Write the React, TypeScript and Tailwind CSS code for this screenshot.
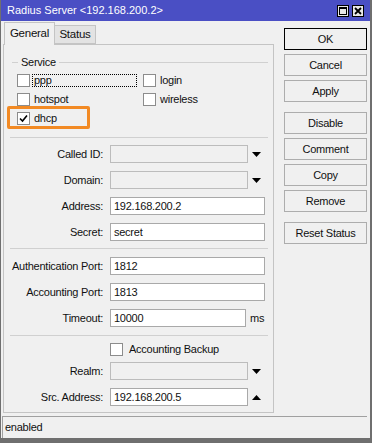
import React from 'react';

const Tri: React.FC<{ up?: boolean }> = ({ up }) => (
  <svg width="9" height="5" viewBox="0 0 9 5" className="ml-[4px] shrink-0">
    <polygon points={up ? '0,5 9,5 4.5,0' : '0,0 9,0 4.5,5'} fill="#000" />
  </svg>
);

const Box: React.FC<{ checked?: boolean }> = ({ checked }) => (
  <div className="w-[13px] h-[13px] border border-[#8c8c8c] bg-white shrink-0 flex items-center justify-center">
    {checked && (
      <svg width="9" height="9" viewBox="0 0 9 9">
        <path d="M1 4.5 L3.5 7 L8 1.5" stroke="#000" strokeWidth="1.6" fill="none" />
      </svg>
    )}
  </div>
);

const Field: React.FC<{ value?: string; w: string; disabled?: boolean }> = ({ value, w, disabled }) => (
  <div
    className={`${w} h-[18px] border flex items-center pl-[3px] ${
      disabled ? 'bg-[#f0f0f0] border-[#bcbcbc]' : 'bg-white border-[#a9a9a9]'
    }`}
  >
    {value}
  </div>
);

const Row: React.FC<{ label: string; className?: string; children: React.ReactNode }> = ({ label, className, children }) => (
  <div className={`flex items-center ${className ?? ''}`}>
    <div className="w-[99px] mr-[7px] text-right whitespace-nowrap">{label}</div>
    {children}
  </div>
);

const Sep: React.FC<{ className?: string }> = ({ className }) => (
  <div className={`ml-[6px] mr-[5px] h-px bg-[#d0d0d0] ${className ?? ''}`} />
);

const Btn: React.FC<{ label: string; main?: boolean; className?: string }> = ({ label, main, className }) => (
  <div
    className={`w-[83px] h-[22px] flex items-center justify-center bg-[#f0f0f0] border ${
      main ? 'border-black' : 'border-[#adadad]'
    } ${className ?? ''}`}
  >
    {label}
  </div>
);

export default function App() {
  return (
    <div
      className="w-[372px] h-[443px] bg-[#f0f0f0] flex flex-col border-l border-r-2 border-b-[5px] border-[#6f6f6f] text-[11px] tracking-[-0.25px] text-[#111] overflow-hidden"
      style={{ fontFamily: '"Liberation Sans", Arial, sans-serif' }}
    >
      {/* title bar */}
      <div className="h-[21px] shrink-0 bg-[#4a4fc4] flex items-center pl-[6px] pr-[6px] text-white text-[11px] tracking-normal">
        <span className="flex-1">Radius Server &lt;192.168.200.2&gt;</span>
        <div className="flex gap-[3px]">
          <div className="w-[12px] h-[12px] bg-[#e8e8e8] border border-black flex items-center justify-center">
            <div className="w-[8px] h-[8px] border border-black border-t-2" />
          </div>
          <div className="w-[12px] h-[12px] bg-[#e8e8e8] border border-black flex items-center justify-center">
            <svg width="8" height="8" viewBox="0 0 8 8">
              <path d="M1 1 L7 7 M7 1 L1 7" stroke="#000" strokeWidth="1.8" />
            </svg>
          </div>
        </div>
      </div>

      {/* body */}
      <div className="flex mt-px">
        <div className="ml-[2px] w-[271px] flex flex-col">
          {/* tabs */}
          <div className="flex items-start h-[23px] -mb-px relative z-10 pl-px">
            <div className="w-[51px] h-[23px] bg-[#f0f0f0] border border-b-0 border-[#c4c4c4] flex items-center justify-center text-[11.5px]">
              General
            </div>
            <div className="mt-[3px] w-[41px] h-[19px] bg-[#e3e3e3] border border-l-0 border-[#c4c4c4] flex items-center justify-center text-[11.5px]">
              Status
            </div>
          </div>

          {/* panel */}
          <div className="relative h-[369px] border border-[#c4c4c4] bg-[#f0f0f0] flex flex-col">
            {/* Service group */}
            <div className="mt-[11px] ml-[8px] mr-[5px] h-[13px] flex items-center">
              <div className="w-[6px] h-px bg-[#d0d0d0]" />
              <span className="mx-[3px]">Service</span>
              <div className="flex-1 h-px bg-[#d0d0d0]" />
            </div>
            <div className="mt-[5px] ml-[13px] grid grid-cols-[126px_1fr] gap-y-[6px]">
              <div className="flex items-center h-[13px]">
                <Box />
                <span className="ml-[2px] w-[105px] h-[13px] border border-dotted border-black flex items-center pl-px">
                  ppp
                </span>
              </div>
              <div className="flex items-center h-[13px]">
                <Box />
                <span className="ml-[4px]">login</span>
              </div>
              <div className="flex items-center h-[13px]">
                <Box />
                <span className="ml-[4px]">hotspot</span>
              </div>
              <div className="flex items-center h-[13px]">
                <Box />
                <span className="ml-[4px]">wireless</span>
              </div>
              <div className="flex items-center h-[13px]">
                <Box checked />
                <span className="ml-[4px]">dhcp</span>
              </div>
            </div>
            {/* highlight annotation */}
            <div className="absolute left-[3px] top-[61px] w-[83px] h-[23px] border-[3px] border-[#f28a24] rounded-[2px]" />

            <Sep className="mt-[12px]" />

            <Row label="Called ID:" className="mt-[7px]">
              <Field w="w-[138px]" disabled />
              <Tri />
            </Row>
            <Row label="Domain:" className="mt-[8px]">
              <Field w="w-[138px]" disabled />
              <Tri />
            </Row>
            <Row label="Address:" className="mt-[8px]">
              <Field w="w-[155px]" value="192.168.200.2" />
            </Row>
            <Row label="Secret:" className="mt-[8px]">
              <Field w="w-[155px]" value="secret" />
            </Row>

            <Sep className="mt-[7px]" />

            <Row label="Authentication Port:" className="mt-[8px]">
              <Field w="w-[155px]" value="1812" />
            </Row>
            <Row label="Accounting Port:" className="mt-[8px]">
              <Field w="w-[155px]" value="1813" />
            </Row>
            <Row label="Timeout:" className="mt-[8px]">
              <Field w="w-[136px]" value="10000" />
              <span className="ml-[4px]">ms</span>
            </Row>

            <Sep className="mt-[8px]" />

            <div className="mt-[7px] ml-[106px] flex items-center h-[13px]">
              <Box />
              <span className="ml-[6px]">Accounting Backup</span>
            </div>
            <Row label="Realm:" className="mt-[6px]">
              <Field w="w-[138px]" disabled />
              <Tri />
            </Row>
            <Row label="Src. Address:" className="mt-[8px]">
              <Field w="w-[138px]" value="192.168.200.5" />
              <Tri up />
            </Row>
          </div>
        </div>

        {/* buttons */}
        <div className="ml-[10px] mt-[6px] flex flex-col">
          <Btn label="OK" main />
          <Btn label="Cancel" className="mt-[4px]" />
          <Btn label="Apply" className="mt-[4px]" />
          <Btn label="Disable" className="mt-[10px]" />
          <Btn label="Comment" className="mt-[4px]" />
          <Btn label="Copy" className="mt-[4px]" />
          <Btn label="Remove" className="mt-[4px]" />
          <Btn label="Reset Status" className="mt-[10px]" />
        </div>
      </div>

      {/* status bar */}
      <div className="mt-[3px] ml-px mr-[3px] h-[22px] border-t border-l border-[#a0a0a0] flex items-center pl-[2px]">
        enabled
      </div>
    </div>
  );
}
